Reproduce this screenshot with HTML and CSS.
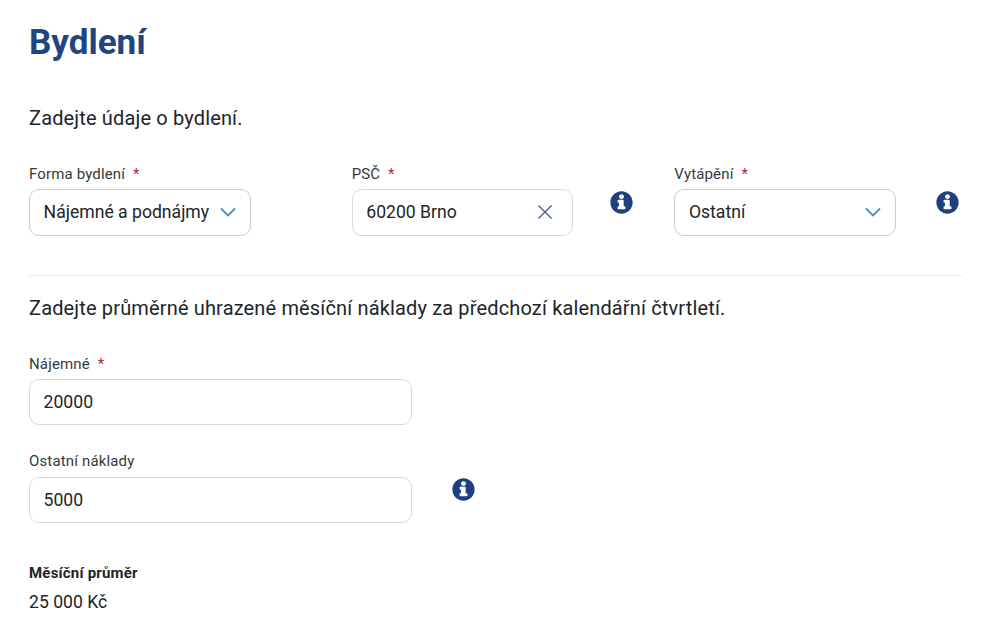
FILE: index.html
```html
<!DOCTYPE html>
<html lang="cs">
<head>
<meta charset="utf-8">
<title>Bydlení</title>
<link rel="stylesheet" href="styles.css">
</head>
<body>
<svg class="defs" width="0" height="0" aria-hidden="true">
  <symbol id="info" viewBox="0 0 512 512">
    <path fill-rule="evenodd" d="M256 8C119 8 8 119 8 256s111 248 248 248 248-111 248-248S393 8 256 8zm0 62c32 0 56 24 56 54s-24 54-56 54-56-24-56-54 24-54 56-54zm88 320c0 9-6 16-15 16H183c-9 0-15-7-15-16v-32c0-9 6-16 15-16h17v-82h-17c-9 0-15-7-15-16v-32c0-9 6-16 15-16h107c9 0 15 7 15 16v130h24c9 0 15 7 15 16v32z"/>
  </symbol>
  <symbol id="chev" viewBox="0 0 16 10">
    <path d="M1 1.5l7 7 7-7" fill="none" stroke="currentColor" stroke-width="1.9"/>
  </symbol>
  <symbol id="cross" viewBox="0 0 16 16">
    <path d="M1.5 1.5l13 13M14.5 1.5l-13 13" fill="none" stroke="currentColor" stroke-width="1.4"/>
  </symbol>
</svg>
<main class="page">
  <h1 class="title">Bydlení</h1>
  <p class="lead">Zadejte údaje o bydlení.</p>
  <div class="row-three">
    <div class="cell">
      <div class="field">
        <div class="label">Forma bydlení <span class="req">*</span></div>
        <div class="control"><span class="value">Nájemné a podnájmy</span><svg class="chev"><use href="#chev"/></svg></div>
      </div>
    </div>
    <div class="cell">
      <div class="field">
        <div class="label">PSČ <span class="req">*</span></div>
        <div class="control control-light"><span class="value">60200 Brno</span><svg class="cross"><use href="#cross"/></svg></div>
      </div>
      <svg class="info"><use href="#info"/></svg>
    </div>
    <div class="cell">
      <div class="field">
        <div class="label">Vytápění <span class="req">*</span></div>
        <div class="control"><span class="value">Ostatní</span><svg class="chev"><use href="#chev"/></svg></div>
      </div>
      <svg class="info info-last"><use href="#info"/></svg>
    </div>
  </div>
  <hr class="rule">
  <p class="lead lead-costs">Zadejte průměrné uhrazené měsíční náklady za předchozí kalendářní čtvrtletí.</p>
  <div class="wide-row">
    <div class="field field-wide">
      <div class="label">Nájemné <span class="req">*</span></div>
      <div class="control control-light"><span class="value">20000</span></div>
    </div>
  </div>
  <div class="wide-row wide-row-second">
    <div class="field field-wide">
      <div class="label label-tall">Ostatní náklady</div>
      <div class="control control-light"><span class="value">5000</span></div>
    </div>
    <svg class="info info-wide"><use href="#info"/></svg>
  </div>
  <div class="summary">
    <div class="summary-label">Měsíční průměr</div>
    <div class="summary-value">25 000 Kč</div>
  </div>
</main>
</body>
</html>
```

FILE: styles.css
```css
* { box-sizing: border-box; }
html, body { margin: 0; padding: 0; background: #fff; }
body { font-family: Roboto, "Liberation Sans", sans-serif; color: #212529; overflow: hidden; }
.defs { position: absolute; }
.page { width: 987px; height: 632px; padding: 22px 25px 0 29px; overflow: hidden; }
.title { margin: 0; font-size: 35px; line-height: 42px; font-weight: 700; color: #224480; }
.lead { margin: 42px 0 0; font-size: 20px; line-height: 24px; letter-spacing: 0.15px; }
.row-three { display: grid; grid-template-columns: 322.67px 322.67px 287.66px; margin-top: 35px; }
.cell { display: flex; align-items: flex-start; }
.field { width: 221.67px; flex: none; }
.label { font-size: 15px; line-height: 18px; height: 24px; color: #343a40; letter-spacing: 0.15px; }
.label-tall { height: 25px; }
.req { color: #b02a37; margin-left: 4px; }
.control { height: 47px; display: flex; align-items: center; justify-content: space-between; padding: 0 14px 1px 13.6px; border: 1px solid #c6ccd9; border-radius: 10px; }
.control-light { border-color: #d5d8dc; }
.value { font-size: 17.6px; line-height: 22px; color: #212529; }
.chev { width: 16px; height: 10px; color: #4a90c8; margin-right: 0; }
.cross { width: 16px; height: 16px; color: #4a5f85; margin-right: 5px; }
.info { width: 23px; height: 23px; fill: #1f3f7f; margin: 26px 0 0 37px; flex: none; }
.info-last { margin-left: 40px; }
.rule { margin: 39px 0 0; border: 0; border-top: 1px solid #e9ecef; }
.lead-costs { margin-top: 20px; }
.wide-row { display: flex; align-items: flex-start; margin-top: 35px; }
.wide-row-second { margin-top: 27px; }
.field-wide { width: 383px; }
.field-wide .control { height: 46px; }
.info-wide { margin: 26px 0 0 40px; }
.summary { margin-top: 40px; }
.summary-label { font-size: 15px; line-height: 20px; font-weight: 700; color: #212529; letter-spacing: 0.2px; }
.summary-value { margin-top: 8px; font-size: 17.6px; line-height: 22px; }
```
